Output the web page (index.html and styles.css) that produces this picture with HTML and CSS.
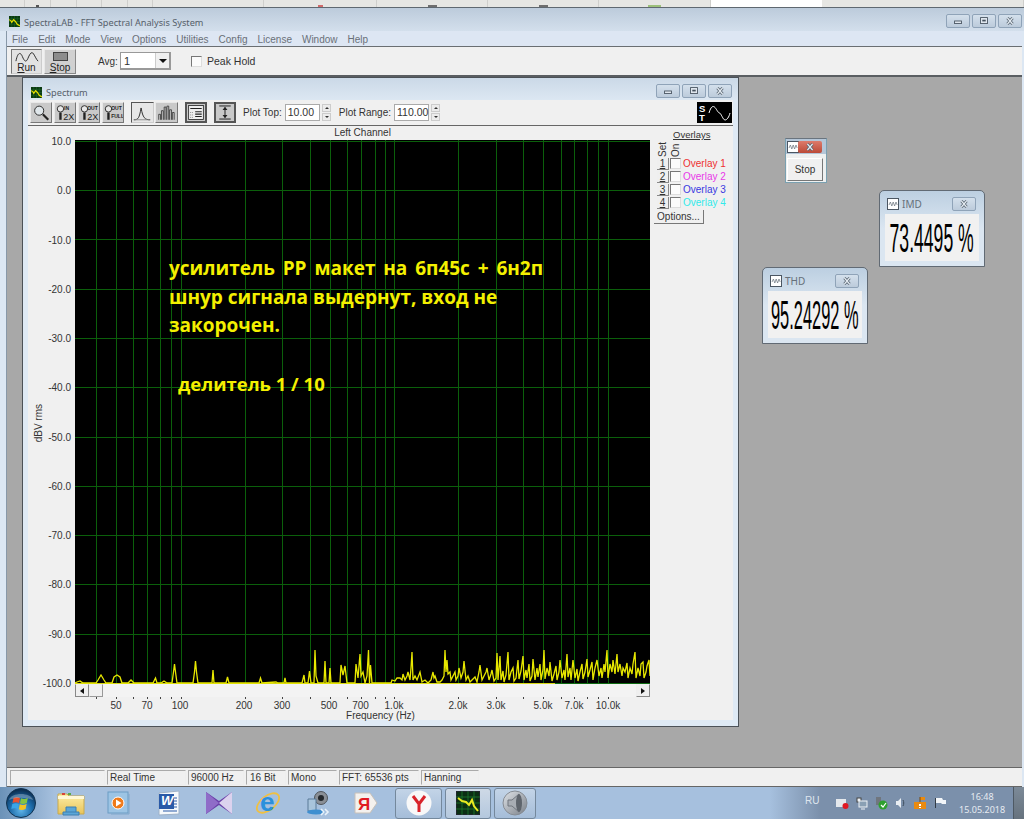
FILE: index.html
```html
<!DOCTYPE html>
<html lang="en">
<head>
<meta charset="utf-8">
<title>SpectraLAB</title>
<link rel="stylesheet" href="styles.css">
</head>
<body>
<svg class="sprites" width="0" height="0" aria-hidden="true">
  <symbol id="i-app" viewBox="0 0 12 12"><rect width="12" height="12" fill="#0b3a12"/><path d="M0 3h12M0 6h12M0 9h12M3 0v12M6 0v12M9 0v12" stroke="#1f6a2a" stroke-width=".6"/><path d="M0 4l2 1 1 2 2-3 2 2 2 3 3 2" fill="none" stroke="#e8e000" stroke-width="1.3"/></symbol>
  <symbol id="i-min" viewBox="0 0 24 14"><rect x="8" y="7" width="8" height="3" fill="#dfe6ee" stroke="#44505c"/></symbol>
  <symbol id="i-max" viewBox="0 0 24 14"><rect x="8" y="3" width="8" height="7" fill="#dfe6ee" stroke="#44505c"/><rect x="10" y="5.5" width="4" height="2" fill="#44505c"/></symbol>
  <symbol id="i-close" viewBox="0 0 24 14"><path d="M9 3.5l6 7M15 3.5l-6 7" stroke="#56626e" stroke-width="3.2"/><path d="M9 3.5l6 7M15 3.5l-6 7" stroke="#e6edf4" stroke-width="1.4"/></symbol>
  <symbol id="i-wave" viewBox="0 0 12 12"><rect x=".5" y=".5" width="11" height="11" fill="#fff" stroke="#4b5662"/><path d="M2 7l1.4-3 1.4 4 1.4-4 1.4 4 1.4-4 1.2 3" fill="none" stroke="#66707a" stroke-width=".7"/></symbol>
</svg>

<div class="topstrip">
  <div class="strip-cell"></div><div class="strip-cell"><i class="dot dot-dark"></i></div><div class="strip-cell"></div><div class="strip-cell"></div><div class="strip-cell"></div><div class="strip-cell"></div>
  <div class="strip-cell"></div><div class="strip-cell"><i class="dot dot-red"></i></div><div class="strip-cell"><i class="dot dot-grey"></i></div><div class="strip-cell"><i class="dot dot-grey"></i></div><div class="strip-cell"><i class="dot dot-green"></i></div>
  <div class="strip-white"></div><div class="strip-cell"></div>
</div>

<div class="app">
  <header class="app-title">
    <svg class="app-icon"><use href="#i-app"/></svg>
    <span class="title-text">SpectraLAB - FFT Spectral Analysis System</span>
    <div class="wbtns wbtns-main">
      <span class="wbtn"><svg><use href="#i-min"/></svg></span>
      <span class="wbtn"><svg><use href="#i-max"/></svg></span>
      <span class="wbtn"><svg><use href="#i-close"/></svg></span>
    </div>
  </header>

  <div class="app-inner">
    <nav class="menu"><span>File</span><span>Edit</span><span>Mode</span><span>View</span><span>Options</span><span>Utilities</span><span>Config</span><span>License</span><span>Window</span><span>Help</span></nav>

    <div class="toolbar">
      <button class="tb-big tb-run"><svg width="26" height="13" viewBox="0 0 26 13"><path d="M1 11C3 1 6 1 8 6s4 7 6 2 4-8 6-5 3 6 5 8" fill="none" stroke="#222" stroke-width="1"/></svg><span><u>R</u>un</span></button>
      <button class="tb-big tb-stop"><i class="stop-rect"></i><span><u>S</u>top</span></button>
      <span class="avg-label">Avg:</span>
      <div class="combo"><span>1</span><i class="combo-btn"></i></div>
      <i class="check check-peak"></i>
      <span class="peak-label">Peak Hold</span>
    </div>

    <main class="mdi">
      <section class="win spectrum">
        <header class="spec-title">
          <svg class="app-icon"><use href="#i-app"/></svg>
          <span class="title-text">Spectrum</span>
          <div class="wbtns wbtns-spec">
            <span class="wbtn"><svg><use href="#i-min"/></svg></span>
            <span class="wbtn"><svg><use href="#i-max"/></svg></span>
            <span class="wbtn"><svg><use href="#i-close"/></svg></span>
          </div>
        </header>
        <div class="spec-tools">
          <button class="tool"><svg viewBox="0 0 22 20"><circle cx="9" cy="8" r="5" fill="#dfe6ea" stroke="#222"/><path d="M13 12l6 6" stroke="#222" stroke-width="2.4"/></svg></button>
          <button class="tool"><svg viewBox="0 0 22 20"><circle cx="6" cy="6" r="3.5" fill="#e8e8e8" stroke="#222"/><path d="M6 10v8" stroke="#222" stroke-width="2.6"/><text x="10" y="7" class="tool-small">IN</text><text x="9" y="18" class="tool-big">2X</text></svg></button>
          <button class="tool"><svg viewBox="0 0 22 20"><circle cx="6" cy="6" r="3.5" fill="#e8e8e8" stroke="#222"/><path d="M6 10v8" stroke="#222" stroke-width="2.6"/><text x="9" y="7" class="tool-small">OUT</text><text x="9" y="18" class="tool-big">2X</text></svg></button>
          <button class="tool"><svg viewBox="0 0 22 20"><circle cx="6" cy="6" r="3.5" fill="#e8e8e8" stroke="#222"/><path d="M6 10v8" stroke="#222" stroke-width="2.6"/><text x="9" y="7" class="tool-small">OUT</text><text x="9" y="16" class="tool-small">FULL</text></svg></button>
          <button class="tool tool-on tool-gap"><svg viewBox="0 0 22 20"><path d="M2 18c5 0 6-2 8-13 2 11 4 13 10 13" fill="none" stroke="#222"/><path d="M2 18h18" stroke="#888"/></svg></button>
          <button class="tool tool-tight"><svg viewBox="0 0 22 20"><path d="M3 18v-6h2v6M6 18V8h2v10M9 18V4h2v14M12 18V3h2v15M15 18V7h2v11M18 18v-8h2v8" fill="none" stroke="#222" stroke-width=".8"/></svg></button>
          <button class="tool tool-dark tool-gap"><svg viewBox="0 0 22 20"><rect x="2" y="1.5" width="18" height="17" fill="#eee" stroke="#222"/><path d="M4 5h14M10 9h8M10 12h8M10 15h8" stroke="#222" stroke-width="1.3"/><path d="M4 10h3M4 13h3M4 16h3" stroke="#666" stroke-dasharray="1 1"/></svg></button>
          <button class="tool tool-dark tool-gap"><svg viewBox="0 0 22 20"><path d="M4 2h14M4 18h14" stroke="#222" stroke-width="1.2"/><path d="M11 4v12" stroke="#222" stroke-width="1.2"/><path d="M8 7l3-4 3 4zM8 13l3 4 3-4z" fill="#222"/></svg></button>
          <label class="plot-label plot-label-top">Plot Top:</label>
          <span class="num-input">10.00</span>
          <span class="spin"><i class="spin-up"></i><i class="spin-down"></i></span>
          <label class="plot-label plot-label-range">Plot Range:</label>
          <span class="num-input">110.00</span>
          <span class="spin"><i class="spin-up"></i><i class="spin-down"></i></span>
          <div class="st-logo"><span class="st-letters">S<br>T</span><svg width="23" height="16" viewBox="0 0 23 16"><path d="M1 8C3 1 5 1 6.5 2S10 8 11.5 8 15 15 17 15 21 12 22 8" fill="none" stroke="#fff"/></svg></div>
        </div>

        <div class="spec-body">
          <div class="y-col">
            <div class="y-name"><span>dBV rms</span></div>
            <div class="y-nums"><span>10.0</span><span>0.0</span><span>-10.0</span><span>-20.0</span><span>-30.0</span><span>-40.0</span><span>-50.0</span><span>-60.0</span><span>-70.0</span><span>-80.0</span><span>-90.0</span><span>-100.0</span></div>
          </div>
          <div class="plot-col">
            <div class="plot-caption">Left Channel</div>
            <div class="plot-wrap">
              <svg class="plot" width="575" height="544" viewBox="75 140 575 544">
                <rect x="75" y="140" width="575" height="544" fill="#000"/>
                <path class="grid" d="M75 141.500h575M75 190.500h575M75 239.500h575M75 289.500h575M75 338.500h575M75 387.500h575M75 437.500h575M75 486.500h575M75 535.500h575M75 584.500h575M75 634.500h575
                M96.500 140v544M116.500 140v544M133.500 140v544M147.500 140v544M160.500 140v544M171.500 140v544M181.500 140v544M245.500 140v544M282.500 140v544M310.500 140v544M330.500 140v544M347.500 140v544M361.500 140v544M375.500 140v544M385.500 140v544M394.500 140v544M458.500 140v544M496.500 140v544M523.500 140v544M543.500 140v544M561.500 140v544M574.500 140v544M587.500 140v544M598.500 140v544M608.500 140v544"/>
                <path class="grid-base" d="M555 683.500h95"/>
                <path class="base" d="M75 683.500h480"/>
                <path class="trace" d="M75 683L77 682L80 681L83 683L96 683L98 680L101 675L104 680L106 683L112 683L114 677L117 675L120 677L122 683L128 683L131 680L134 683L153 683L155.500 678L157 683L161 683L164 681L167 683L172 683L173.500 672L174.500 664L175.500 672L177 683L193 683L194.500 672L195.500 661L196.500 672L198 683L212 683L213 670L214 683L226 683L227.500 677L229 683L259 683L260.500 678L262 683L276 682L278 683L284 683L285 678L286 683L302 683L304 675L305 683L308 683L309.500 671L311 683L314 683L315 650L316 676L318 683L324 683L325 661L326 683L329 683L330 668L331 683L340 683L341 665L343 675L345 666L347 683L355 683L356 664L358 678L360 654L361 676L363 672L365 683L367 676L368.500 650L369.500 683L370.500 665L372 683L391 683L392 680L395 681L397 678L400 678L402 680L403 674L405 680L407 676L408 672L410 680L411 668L412 652L413 680L415 676L417 680L420 672L422 682L425 680L428 683L431 680L433 672L434 678L435 676L437 682L440 682L442 680L444 676L445 650L446 672L447 660L448 674L450 672L451 680L453 676L455 672L456 680L458 676L459 668L461 678L463 672L464 661L466 680L468 676L470 682L472 680L474 678L475 677L477 682L479 672L480 665L482 680L484 676L486 672L487 668L489 680L491 674L492 670L494 681L496 678L497 653L498 680L500 656L501 680L503 671L504 682L506 675L508 652L509 680L511 672L513 668L514 681L516 678L518 660L519 679L521 671L523 656L524 680L526 670L527 678L529 664L530 681L532 676L533 659L535 680L537 668L538 677L540 664L541 680L543 670L544 650L545 679L547 668L549 676L550 662L552 681L554 674L556 666L557 680L559 672L560 660L562 678L564 670L565 680L567 654L568 677L570 668L571 680L573 660L575 678L577 669L578 681L580 672L582 664L583 679L585 672L587 659L588 677L590 670L592 662L593 680L595 668L597 660L599 676L601 668L602 678L604 664L605 672L607 650L608 678L610 664L612 672L613 660L615 674L617 654L618 672L620 664L622 676L623 668L625 672L627 663L628 678L630 668L632 674L633 664L635 652L636 678L638 668L640 676L641 664L643 662L644 678L646 672L647 666L649 660L650 676"/>
              </svg>
              <div class="note">
                <p class="note-first">усилитель РР макет на 6п45с + 6н2п</p>
                <p>шнур сигнала выдернут, вход не</p>
                <p>закорочен.</p>
                <p class="note-gap">делитель 1 / 10</p>
              </div>
            </div>
            <div class="hscroll"><i class="sb-btn sb-left"></i><i class="sb-thumb"></i><i class="sb-btn sb-right"></i></div>
            <svg class="axis" width="575" height="22" viewBox="75 697 575 22">
              <path class="ticks" d="M116.500 697v2M133.500 697v2M147.500 697v2M160.500 697v2M171.500 697v2M181.500 697v2M245.500 697v2M282.500 697v2M310.500 697v2M330.500 697v2M347.500 697v2M361.500 697v2M375.500 697v2M385.500 697v2M394.500 697v2M458.500 697v2M496.500 697v2M523.500 697v2M543.500 697v2M561.500 697v2M574.500 697v2M587.500 697v2M598.500 697v2M608.500 697v2M96.500 697v2"/>
              <g class="axis-labels">
                <text x="116" y="709">50</text><text x="147" y="709">70</text><text x="180" y="709">100</text><text x="244" y="709">200</text><text x="282" y="709">300</text><text x="329" y="709">500</text><text x="360.500" y="709">700</text><text x="394" y="709">1.0k</text><text x="458" y="709">2.0k</text><text x="496" y="709">3.0k</text><text x="543" y="709">5.0k</text><text x="574" y="709">7.0k</text><text x="608" y="709">10.0k</text>
                <text x="380.500" y="718.500">Frequency (Hz)</text>
              </g>
            </svg>
          </div>
          <aside class="overlays">
            <div class="ov-head">Overlays</div>
            <div class="ov-vert"><span>Set</span><span>On</span></div>
            <div class="ov-row"><button class="ov-num">1</button><i class="check"></i><span class="ov-name ov-red">Overlay 1</span></div>
            <div class="ov-row"><button class="ov-num">2</button><i class="check"></i><span class="ov-name ov-pink">Overlay 2</span></div>
            <div class="ov-row"><button class="ov-num">3</button><i class="check"></i><span class="ov-name ov-blue">Overlay 3</span></div>
            <div class="ov-row"><button class="ov-num">4</button><i class="check"></i><span class="ov-name ov-cyan">Overlay 4</span></div>
            <button class="ov-options">Options...</button>
          </aside>
        </div>
      </section>

      <section class="win stopwin">
        <header class="stop-head"><svg class="mini-icon"><use href="#i-wave"/></svg><span class="stop-x"><svg><use href="#i-close"/></svg></span></header>
        <button class="stop-btn">Stop</button>
      </section>

      <section class="win meter meter-imd">
        <header class="meter-head"><svg class="mini-icon"><use href="#i-wave"/></svg><span class="meter-name">IMD</span><span class="wbtn"><svg><use href="#i-close"/></svg></span></header>
        <div class="meter-value"><span>73.4495 %</span></div>
      </section>

      <section class="win meter meter-thd">
        <header class="meter-head"><svg class="mini-icon"><use href="#i-wave"/></svg><span class="meter-name">THD</span><span class="wbtn"><svg><use href="#i-close"/></svg></span></header>
        <div class="meter-value"><span>95.24292 %</span></div>
      </section>
    </main>

    <footer class="status">
      <span class="st-cell st-a"></span><span class="st-cell st-b">Real Time</span><span class="st-cell st-c">96000 Hz</span><span class="st-cell st-d">16 Bit</span><span class="st-cell st-e">Mono</span><span class="st-cell st-f">FFT: 65536 pts</span><span class="st-cell st-g">Hanning</span>
    </footer>
  </div>
</div>

<div class="taskbar">
  <div class="start">
    <svg width="30" height="30" viewBox="0 0 30 30">
      <defs>
        <radialGradient id="orb" cx="50%" cy="75%" r="70%"><stop offset="0" stop-color="#5fb4e8"/><stop offset=".55" stop-color="#1c6aa8"/><stop offset="1" stop-color="#0d2f52"/></radialGradient>
        <linearGradient id="fold" x1="0" y1="0" x2="0" y2="1"><stop offset="0" stop-color="#fdeea8"/><stop offset="1" stop-color="#e8c45a"/></linearGradient>
        <linearGradient id="spk" x1="0" y1="0" x2="1" y2="1"><stop offset="0" stop-color="#dfe3e8"/><stop offset="1" stop-color="#7a8088"/></linearGradient>
      </defs>
      <circle cx="15" cy="15" r="14.500" fill="url(#orb)" stroke="#12324f"/>
      <path d="M7.500 10c2.500-1.200 4.500-1 6.500 0l-1 5c-2-1-4-1.200-6.500 0z" fill="#e8512f"/>
      <path d="M15 10.300c2 1 4.200 1 6.800-.3l-1 5c-2.500 1.200-4.800 1.300-6.800.3z" fill="#86c440"/>
      <path d="M6.300 16c2.500-1.200 4.500-1 6.500 0l-1 5c-2-1-4-1.200-6.500 0z" fill="#3aa5e8"/>
      <path d="M13.800 16.300c2 1 4.200 1 6.800-.3l-1 5c-2.500 1.200-4.800 1.300-6.800.3z" fill="#f5c322"/>
      <path d="M3 12C5 4 25 4 27 12 20 9 10 9 3 12z" fill="#fff" opacity=".28"/>
    </svg>
  </div>
  <div class="slot"><svg width="28" height="26" viewBox="0 0 28 26"><path d="M1 4h9l2 2h15v18H1z" fill="url(#fold)" stroke="#c9a94c"/><path d="M1 6h26v3H1z" fill="#fff8d6"/><rect x="5" y="3" width="3" height="2" fill="#d9443a"/><rect x="11" y="3" width="3" height="2" fill="#5aa84a"/><path d="M9 22v-5h10v5M6 22h16v3H6z" fill="#5aa6d8" stroke="#3c7eb0"/></svg></div>
  <div class="slot"><svg width="26" height="24" viewBox="0 0 26 24"><rect x="1" y="1" width="20" height="21" fill="#9cc4e4" stroke="#6b9cc4"/><circle cx="11" cy="12" r="6" fill="#ef7a1a" stroke="#fff"/><path d="M9 8.500l5.500 3.500-5.500 3.500z" fill="#fff"/><path d="M22 3v20H4" fill="none" stroke="#7ea8cc"/></svg></div>
  <div class="slot"><svg width="26" height="26" viewBox="0 0 26 26"><path d="M3 3l20-2v23l-20 1z" fill="#f5f8fb" stroke="#9fb2c8"/><rect x="3" y="4" width="15" height="15" fill="#2a5aa8"/><text x="5" y="15" class="word-w">W</text><path d="M18 8h3M18 11h3M18 14h3M18 17h3M7 21h14" stroke="#2a5aa8"/></svg></div>
  <div class="slot"><svg width="28" height="24" viewBox="0 0 28 24"><path d="M1 1l13 9 13-9v22l-13-9-13 9z" fill="#6a3fa8"/><path d="M1 1l13 11L1 23z" fill="#8f6cc8"/><path d="M27 1L14 12l13 11z" fill="#dcd2ee"/></svg></div>
  <div class="slot"><svg width="28" height="32" viewBox="0 0 28 32"><ellipse cx="14" cy="16" rx="13" ry="7" transform="rotate(-38 14 16)" fill="none" stroke="#f0c040" stroke-width="1.800"/><text x="6" y="24" class="ie-e">e</text></svg></div>
  <div class="slot"><svg width="28" height="28" viewBox="0 0 28 28"><circle cx="18" cy="9" r="6.500" fill="#8a8f96" stroke="#50555c"/><circle cx="18" cy="9" r="3" fill="#24282c"/><path d="M5 10h8v12H5z" fill="#a8c4dc" stroke="#5b7a98"/><ellipse cx="13" cy="23" rx="9" ry="2.500" fill="#3f8fd0"/><path d="M18 20l3 3-3 3M22 20l3 3-3 3" fill="none" stroke="#e8f2fb" stroke-width="1.600"/></svg></div>
  <div class="slot"><svg width="26" height="26" viewBox="0 0 26 26"><path d="M2 3h15l7 10-7 10H2z" fill="#f4f1ee" stroke="#c8c0b8"/><text x="5" y="20" class="ya">Я</text></svg></div>
  <div class="tb-btn tb-btn-y"><svg width="26" height="26" viewBox="0 0 26 26"><circle cx="13" cy="13" r="12.500" fill="#f8f8f8"/><path d="M7 6l6 8 6-8M13 14v8" fill="none" stroke="#d8232a" stroke-width="3"/></svg></div>
  <div class="tb-btn tb-btn-s"><svg width="24" height="24" viewBox="0 0 24 24"><rect x=".5" y=".5" width="23" height="23" fill="#0b2f14" stroke="#20262c"/><path d="M0 6h24M0 12h24M0 18h24M6 0v24M12 0v24M18 0v24" stroke="#1e7a2e" stroke-width=".8"/><path d="M2 7l4 3 4 1 3 3 3-5 2 6 4 5" fill="none" stroke="#eaea20" stroke-width="2"/></svg></div>
  <div class="tb-btn tb-btn-v"><svg width="26" height="26" viewBox="0 0 26 26"><circle cx="13" cy="13" r="12" fill="url(#spk)" stroke="#868c94"/><path d="M6 10h4l7-6v18l-7-6H6z" fill="#a8adb4" stroke="#70767e"/><ellipse cx="17" cy="13" rx="3" ry="9" fill="#5e646c"/></svg></div>
  <div class="tray">
    <span class="tray-lang">RU</span>
    <svg width="13" height="13" viewBox="0 0 13 13"><rect y="2" width="10" height="8" fill="#e4e8ec"/><circle cx="9.500" cy="9" r="3" fill="#e01822"/></svg>
    <svg width="12" height="13" viewBox="0 0 12 13"><rect x="1" y="1" width="4" height="4" fill="#eef2f6" stroke="#444"/><rect x="3" y="4" width="8" height="6" fill="#8aa0b4" stroke="#eef2f6"/><path d="M5 12h4" stroke="#eef2f6"/></svg>
    <svg width="13" height="14" viewBox="0 0 13 14"><rect x="1" y="1" width="5" height="8" fill="#70767e"/><circle cx="8" cy="9" r="4.500" fill="#2ea02e"/><path d="M6 9l2 2 3-4" fill="none" stroke="#fff" stroke-width="1.200"/></svg>
    <svg width="11" height="12" viewBox="0 0 11 12"><path d="M1 4h2l3-3v10L3 8H1z" fill="#e8edf2"/><path d="M8 3c1 2 1 4 0 6" fill="none" stroke="#3c4c5c"/></svg>
    <svg width="14" height="14" viewBox="0 0 14 14"><path d="M1 6h12v7H1z" fill="#e98a10"/><path d="M7 1h5v3H7z" fill="#e98a10"/><path d="M7 1v5" stroke="#7a4808"/><rect x="6" y="8" width="2" height="2" fill="#fff"/><rect x="6" y="11" width="2" height="1" fill="#fff"/></svg>
    <svg width="13" height="12" viewBox="0 0 13 12"><path d="M1.500 1v10" stroke="#333c46"/><path d="M2 1h6l1 2h3v4H8L7 6H2z" fill="#f2f5f8"/></svg>
  </div>
  <div class="clock"><span>16:48</span><span>15.05.2018</span></div>
  <div class="show-desktop"></div>
</div>
</body>
</html>
```
FILE: styles.css
```css
* { box-sizing: border-box; }
html, body { margin: 0; padding: 0; }
body {
  width: 1024px; height: 819px; overflow: hidden;
  display: flex; flex-direction: column;
  font-family: "Liberation Sans", Arial, sans-serif; font-size: 10px; color: #333;
  background: #e4e4e2;
}
button { font: inherit; color: inherit; padding: 0; margin: 0; }
i { display: block; }
.sprites { position: absolute; }

/* top strip */
.topstrip { height: 7px; flex: none; display: grid; grid-template-columns: 25px 26px 26px 25px 26px 25px 111px 113px 111px 111px 112px 111px 1fr; background: #e6e6e3; }
.strip-cell { border-right: 1px solid #cfcfcc; display: flex; justify-content: center; align-items: flex-end; }
.strip-white { background: #fff; }
.dot { width: 9px; height: 2px; }
.dot-dark { background: #555; width: 3px; }
.dot-red { background: #d06a6a; width: 5px; }
.dot-grey { background: #6e6e6e; }
.dot-green { background: #9cc07a; width: 13px; }

/* main window */
.app { flex: 1; min-height: 0; display: flex; flex-direction: column; background: #dce7f3; border-top: 1px solid #5f6870; }
.app-title { height: 23px; flex: none; display: flex; align-items: flex-start; padding: 6px 2px 0 9px; background: linear-gradient(#bccbdb, #d3dfec); }
.app-icon { width: 11px; height: 11px; flex: none; margin-right: 4px; margin-top: 2px; }
.title-text { font-family: "Noto Sans", sans-serif; font-size: 9.200px; line-height: 17px; color: #56606a; white-space: nowrap; }
.wbtns { margin-left: auto; display: flex; gap: 2px; }
.wbtn { display: block; width: 24px; height: 14px; border: 1px solid #8fa3b8; border-radius: 2px; background: linear-gradient(#d4e0ec, #bccbdb); flex: none; }
.wbtn svg { display: block; width: 22px; height: 12px; }
.app-inner { flex: 1; min-height: 0; display: flex; flex-direction: column; margin-left: 6px; border-left: 1px solid #8898a8; margin-right: 2px; }
.menu { height: 16px; flex: none; display: flex; gap: 10px; padding: 1px 0 0 5px; align-items: center; background: #dde6f3; color: #6a7078; border-bottom: 1px solid #6a6e72; }
.toolbar { height: 30px; flex: none; display: flex; align-items: center; background: #f0f0f0; border-bottom: 2px solid #5a5e62; padding-left: 4px; }
.tb-big { width: 31px; height: 25px; display: flex; flex-direction: column; align-items: center; border: 1px solid #b0b0b0; border-radius: 0; background: #d0d0d0; line-height: 10px; color: #222; padding-top: 1px; }
.tb-run { background: #e2e2e2; border-color: #777 #ccc #ccc #777; margin-right: 2px; }
.tb-stop { width: 32px; border-color: #e8e8e8 #888 #888 #e8e8e8; }
.stop-rect { width: 15px; height: 10px; margin: 1px 0 2px; background: #8c8c8c; border: 1px solid #444; }
.avg-label { margin-left: 22px; width: 22px; color: #333; }
.combo { width: 51px; height: 18px; background: #fff; border: 1px solid #999; border-right-width: 2px; border-bottom-width: 2px; display: flex; align-items: center; padding-left: 3px; justify-content: space-between; font-size: 11px; }
.combo-btn { width: 14px; height: 15px; background: #f0f0f0; border-left: 1px solid #ccc; position: relative; }
.combo-btn::before { content: ""; position: absolute; left: 3px; top: 6px; border: 4px solid transparent; border-top: 4px solid #111; border-bottom: 0; }
.check { width: 11px; height: 11px; flex: none; background: #fbfbfb; border: 1px solid; border-color: #777 #ddd #ddd #777; }
.check-peak { margin-left: 20px; }
.peak-label { margin-left: 5px; font-size: 10.500px; }

/* MDI */
.mdi { flex: 1; min-height: 0; position: relative; background: #a8a8a8; }
.win { position: absolute; }
.spectrum { left: 15px; top: 0; width: 717px; height: 650px; border: 1px solid #4c5258; background: #dfeaf5; padding: 0 5px 6px; display: flex; flex-direction: column; }
.spec-title { height: 22px; flex: none; display: flex; align-items: flex-start; padding: 6px 0 0 2px; background: linear-gradient(#cbd9e7, #dce7f2); margin: 0 -5px; padding-left: 8px; padding-right: 6px; }
.spec-title .app-icon { margin-top: 3px; }
.spec-tools { height: 26px; flex: none; display: flex; align-items: center; background: #f0f0f0; border-bottom: 1px solid #666; padding-left: 2px; }
.tool { width: 22px; height: 21px; margin-right: 2px; background: #c9c9c9; border: 1px solid; border-color: #e8e8e8 #777 #777 #e8e8e8; display: block; flex: none; }
.tool svg { display: block; width: 20px; height: 19px; }
.tool-gap { margin-left: 5px; }
.tool-on { width: 23px; margin-right: 1px; background: #e6e6e6; border-color: #555 #ccc #ccc #555; }
.tool-tight { width: 23px; margin-right: 2px; }
.tool-dark { border: 2px solid #555; }
.tool-dark svg { width: 18px; height: 17px; }
.tool-small { font-size: 5.500px; font-weight: 700; fill: #222; }
.tool-big { font-size: 10px; fill: #222; }
.word-w { font-size: 13px; font-weight: 700; font-style: italic; fill: #fff; }
.ie-e { font-size: 26px; font-weight: 700; fill: #2a90dc; }
.ya { font-size: 17px; font-weight: 700; fill: #e01a22; }
.plot-label { color: #333; white-space: nowrap; }
.plot-label-top { margin-left: 5px; margin-right: 3px; }
.plot-label-range { margin-left: 8px; margin-right: 3px; }
.num-input { width: 35px; height: 17px; background: #fff; border: 1px solid #aaa; font-size: 10.500px; line-height: 15px; padding-left: 2px; flex: none; }
.spin { width: 9px; height: 17px; margin-left: 2px; display: flex; flex-direction: column; gap: 1px; flex: none; }
.spin i { flex: 1; background: #ececec; border: 1px solid #ccc; position: relative; }
.spin i::before { content: ""; position: absolute; left: 2px; top: 2px; border: 2px solid transparent; }
.spin-up::before { border-bottom-color: #333 !important; border-top: 0 !important; }
.spin-down::before { border-top-color: #333 !important; border-bottom: 0 !important; }
.st-logo { margin-left: auto; margin-right: 1px; width: 35px; height: 21px; background: #000; display: flex; align-items: center; gap: 1px; padding-left: 2px; }
.st-letters { color: #fff; font-weight: 700; font-size: 9.500px; line-height: 9px; width: 8px; }

.spec-body { flex: 1; min-height: 0; display: flex; background: #f0f0f0; }
.y-col { width: 47px; flex: none; display: flex; }
.y-name { width: 21px; flex: none; display: flex; align-items: flex-start; justify-content: center; padding-top: 278px; }
.y-name span { writing-mode: vertical-rl; transform: rotate(180deg); line-height: 12px; }
.y-nums { flex: 1; height: 564px; padding: 10px 4px 0 0; display: flex; flex-direction: column; justify-content: space-between; align-items: flex-end; line-height: 12px; margin-left: -8px; }
.plot-col { width: 575px; flex: none; display: flex; flex-direction: column; }
.plot-caption { height: 14px; flex: none; text-align: center; line-height: 13px; padding-right: 0; }
.plot-wrap { position: relative; height: 544px; flex: none; }
.plot { display: block; }
.grid { stroke: #0b5f0b; stroke-width: 1; fill: none; }
.grid-base { stroke: #0e6a12; stroke-width: 1; }
.base { stroke: #d8d818; stroke-width: 1; }
.trace { stroke: #e8e800; stroke-width: 1.300; fill: none; stroke-linejoin: miter; }
.note { position: absolute; left: 94px; top: 114px; color: #f4f000; font-family: "Open Sans", sans-serif; font-weight: 700; font-size: 19px; line-height: 28.500px; white-space: nowrap; }
.note p { margin: 0; }
.note .note-first { word-spacing: 2.900px; }
.note .note-gap { margin: 30px 0 0 9px; font-size: 18.500px; }
.hscroll { height: 13px; flex: none; display: flex; background: #f3f3f3; }
.sb-btn { width: 14px; height: 13px; background: #efefef; border: 1px solid; border-color: #eee #888 #888 #888; position: relative; flex: none; }
.sb-btn::before { content: ""; position: absolute; top: 3px; left: 4px; border: 3px solid transparent; }
.sb-left::before { border-right: 4px solid #111; border-left: 0; }
.sb-right::before { border-left: 4px solid #111; border-right: 0; }
.sb-right { margin-left: auto; border-color: #eee #888 #888 #eee; }
.sb-thumb { width: 14px; height: 13px; background: #f0f0f0; border: 1px solid; border-color: #eee #999 #999 #eee; }
.axis { display: block; flex: none; overflow: visible; }
.ticks { stroke: #444; stroke-width: 1; }
.axis-labels text { font-size: 10px; fill: #333; text-anchor: middle; }

.overlays { flex: 1; position: relative; display: flex; flex-direction: column; }
.ov-head { margin-left: 23px; width: 37px; line-height: 13px; height: 13px; margin-top: 2px; text-decoration: underline; font-size: 9.500px; white-space: nowrap; }
.ov-vert { height: 16px; display: flex; gap: 2px; padding-left: 7px; margin-bottom: 0; margin-top: 0; }
.ov-vert span { writing-mode: vertical-rl; transform: rotate(180deg); width: 11px; line-height: 11px; text-align: left; }
.ov-row { height: 13px; display: flex; align-items: center; padding-left: 7px; }
.ov-num { width: 12px; height: 12px; background: #efefef; border: 0; border-right: 1px solid #888; border-bottom: 1px solid #888; text-decoration: underline; line-height: 11px; text-align: center; flex: none; }
.ov-row .check { margin-left: 1px; }
.ov-name { margin-left: 2px; white-space: nowrap; }
.ov-red { color: #ee3030; }
.ov-pink { color: #e838e8; }
.ov-blue { color: #3838e0; }
.ov-cyan { color: #30eaea; }
.ov-options { margin: 1px 0 0 4px; width: 50px; height: 14px; background: #f0f0f0; border: 0; border-right: 1px solid #777; border-bottom: 1px solid #777; line-height: 13px; }

/* floating windows */
.stopwin { left: 778px; top: 61px; width: 42px; height: 45px; background: #eef0f0; border: 1px solid #7aa0b0; border-top-color: #6a747e; display: flex; flex-direction: column; }
.stop-head { height: 15px; flex: none; background: #b4c6d8; display: flex; padding: 2px 1px 0 1px; }
.stop-x { display: block; width: 24px; height: 12px; background: linear-gradient(#dd7b6c, #bb4a38); border-radius: 2px; margin-left: -1px; }
.stop-x svg { display: block; width: 24px; height: 12px; }
.mini-icon { width: 12px; height: 12px; flex: none; }
.stop-btn { margin: 4px 0 0 1px; width: 36px; height: 23px; background: #f0f0f0; border: 1px solid; border-color: #fff #777 #777 #fff; }
.meter { width: 106px; height: 77px; border: 1px solid #616a74; border-radius: 5px 5px 0 0; background: linear-gradient(#bccfe1, #dbe6f1 50%); padding: 0 5px 5px; display: flex; flex-direction: column; }
.meter-imd { left: 872px; top: 113px; }
.meter-thd { left: 755px; top: 190px; }
.meter-head { height: 23px; flex: none; display: flex; align-items: center; padding: 2px 3px 0 2px; }
.meter-name { font-family: "Noto Sans", sans-serif; color: #66707a; margin-left: 3px; }
.meter-head .wbtn { margin-left: auto; }
.meter-value { flex: 1; background: #f1f1f1; display: flex; align-items: center; justify-content: center; overflow: hidden; }
.meter-value span { display: block; font-size: 40px; color: #000; white-space: nowrap; transform: scaleX(.44); line-height: 44px; }
.meter-thd .meter-value span { transform: scaleX(.41); }

/* status */
.status { height: 20px; flex: none; display: flex; background: #f0f0f0; border-top: 1px solid #666; border-bottom: 1px solid #666; padding: 2px 0 2px 3px; color: #333; line-height: 14px; gap: 2px; }
.st-cell { border: 1px solid; border-color: #aaa #eee #eee #aaa; padding-left: 2px; white-space: nowrap; flex: none; height: 15px; }
.st-a { width: 95px; }
.st-b { width: 79px; }
.st-c { width: 56px; }
.st-d { width: 40px; padding-left: 3px; }
.st-e { width: 49px; }
.st-f { width: 80px; }
.st-g { width: 58px; }

/* taskbar */
.taskbar { height: 32px; flex: none; display: flex; align-items: center; background: linear-gradient(90deg, #6b92b8 0, #a6c0de 55px, #a6c0de 770px, #7b90ab 820px, #7b90ab 100%); }
.start { width: 46px; flex: none; display: flex; justify-content: center; padding-right: 4px; }
.slot { width: 49.300px; flex: none; display: flex; justify-content: center; align-items: center; }
.tb-btn { width: 47px; height: 31px; flex: none; display: flex; align-items: center; justify-content: center; margin-right: 3px; border: 1px solid #74889c; border-radius: 3px; background: linear-gradient(#c3d4e7, #a5bdd9); }
.tb-btn-y { margin-left: 4px; }
.tb-btn-s { width: 46px; background: linear-gradient(#ced9e6, #b4c8de); }
.tb-btn-v { width: 42px; }
.tray { margin-left: 266px; display: flex; align-items: center; gap: 7px; width: 142px; flex: none; }
.tray-lang { color: #dfe6ee; font-size: 10px; margin-right: 9px; margin-top: -6px; }
.clock { width: 52px; flex: none; display: flex; flex-direction: column; align-items: center; color: #e6ebf1; font-family: "Noto Sans", sans-serif; font-size: 9px; line-height: 13px; margin-left: 9px; }
.show-desktop { margin-left: auto; width: 11px; height: 100%; background: linear-gradient(#7c8a98, #66727e); border-left: 1px solid #4e5964; }
```
